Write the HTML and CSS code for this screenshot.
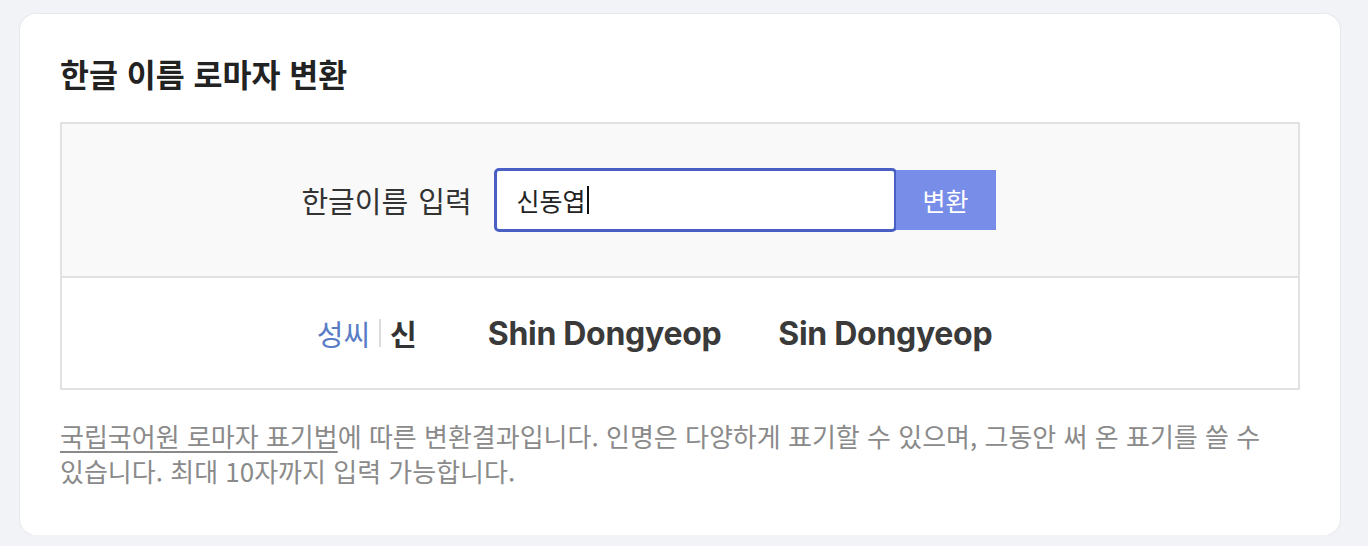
FILE: index.html
```html
<!DOCTYPE html>
<html lang="ko">
<head>
<meta charset="utf-8">
<title>한글 이름 로마자 변환</title>
<link rel="stylesheet" href="styles.css">
</head>
<body>
<div class="page">
  <section class="card">
    <h2 class="title">한글 이름 로마자 변환</h2>
    <div class="converter">
      <div class="input-row">
        <label class="label" for="name">한글이름 입력</label>
        <div class="field">
          <div class="input" id="name"><span class="typed">신동엽</span><span class="caret"></span></div>
          <button class="btn" type="button">변환</button>
        </div>
      </div>
      <div class="result-row">
        <div class="surname"><span class="sn-label">성씨</span><span class="sep"></span><span class="sn-value">신</span></div>
        <div class="roman">Shin Dongyeop</div>
        <div class="roman">Sin Dongyeop</div>
      </div>
    </div>
    <p class="note"><a class="link" href="#">국립국어원 로마자 표기법</a>에 따른 변환결과입니다. 인명은 다양하게 표기할 수 있으며, 그동안 써 온 표기를 쓸 수 있습니다. 최대 10자까지 입력 가능합니다.</p>
  </section>
</div>
</body>
</html>
```
FILE: styles.css
```css
* { box-sizing: border-box; }
html, body { margin: 0; padding: 0; }
body {
  background: #f2f3f7;
  font-family: "Inter", "Noto Sans CJK KR", sans-serif;
  color: #333;
}
.page {
  padding: 14px 28px 0 20px;
}
.card {
  background: #fff;
  border-radius: 16px;
  box-shadow: 0 0 0 1px #e8e9ed;
  padding: 36px 40px 40px 40px;
  height: 521px;
}
.title {
  margin: 0;
  font-family: "Noto Sans CJK KR", sans-serif;
  font-size: 31.5px;
  font-weight: 700;
  line-height: 46px;
  color: #222;
}
.converter {
  margin-top: 26px;
  border: 2px solid #e1e1e1;
}
.input-row {
  background: #f9f9f9;
  border-bottom: 2px solid #e1e1e1;
  height: 154px;
  display: flex;
  align-items: center;
  justify-content: center;
  padding-right: 63px;
}
.label {
  font-family: "Noto Sans CJK KR", sans-serif;
  font-size: 29px;
  word-spacing: 2px;
  color: #333;
  margin-right: 22px;
  white-space: nowrap;
}
.field {
  display: flex;
  align-items: center;
}
.input {
  width: 403px;
  height: 64px;
  border: 3px solid #4a5fc3;
  border-radius: 5px;
  background: #fff;
  display: flex;
  align-items: center;
  padding-left: 20px;
  font-family: "Noto Sans CJK KR", sans-serif;
  font-size: 25px;
  color: #222;
}
.caret {
  display: inline-block;
  width: 2px;
  height: 28px;
  background: #111;
  margin-left: 1px;
}
.btn {
  width: 100px;
  height: 60px;
  margin-left: -1px;
  border: 0;
  background: #788de8;
  color: #fff;
  font-family: "Noto Sans CJK KR", sans-serif;
  font-size: 25px;
  padding: 0;
}
.result-row {
  height: 110px;
  display: flex;
  align-items: center;
  justify-content: center;
  gap: 57px;
  padding-right: 51px;
}
.surname {
  display: flex;
  align-items: center;
  margin-right: 14px;
  font-family: "Noto Sans CJK KR", sans-serif;
  font-size: 29px;
}
.sn-label { color: #5a7cc6; }
.sep {
  display: inline-block;
  width: 2px;
  height: 28px;
  background: #dcdcdc;
  margin: 0 9px 0 9px;
}
.sn-value { font-weight: 700; color: #333; }
.roman {
  font-family: "Inter", sans-serif;
  font-size: 32px;
  font-weight: 700;
  color: #3a3a3a;
  letter-spacing: -0.3px;
}
.note {
  margin: 28px 0 0 0;
  font-family: "Noto Sans CJK KR", sans-serif;
  font-size: 26px;
  line-height: 35px;
  color: #8a8a8a;
  word-break: keep-all;
}
.link {
  display: inline-block;
  color: #8a8a8a;
  text-decoration: underline;
  text-underline-offset: 4px;
}
```
